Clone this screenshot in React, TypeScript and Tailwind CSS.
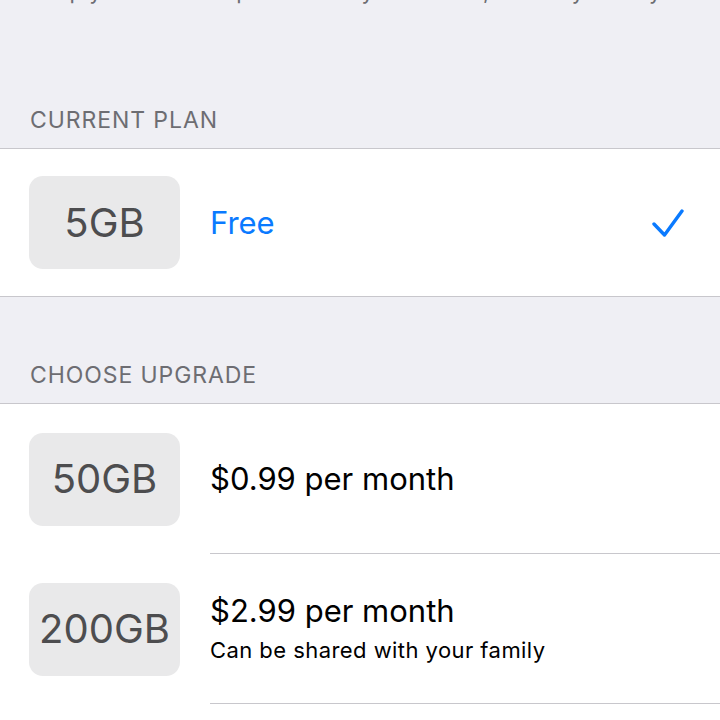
const sep = 'border-[#c8c7cc]'

function Badge({ label }: { label: string }) {
  return (
    <div className="flex h-[93px] w-[151px] shrink-0 items-center justify-center rounded-[14px] bg-[#e9e9ea]">
      <span className="text-[40px] leading-none text-[#4d4d4f]">{label}</span>
    </div>
  )
}

function SectionHeader({ title, height }: { title: string; height: string }) {
  return (
    <div className={`flex items-end px-[30px] pb-[14px] ${height}`}>
      <span className="text-[23px] leading-[28px] tracking-[0.04em] text-[#6d6d72]">{title}</span>
    </div>
  )
}

function UpgradeRow({ size, price, note }: { size: string; price: string; note?: string }) {
  return (
    <div className="flex items-center pl-[29px]">
      <Badge label={size} />
      <div className={`ml-[30px] flex h-[150px] flex-1 flex-col justify-center border-b ${sep}`}>
        <div className="text-[31px] leading-[36px] text-black">{price}</div>
        {note && <div className="mt-[7px] text-[22px] leading-[28px] tracking-[0.02em] text-black">{note}</div>}
      </div>
    </div>
  )
}

export default function App() {
  return (
    <div className="h-[720px] w-[720px] overflow-hidden bg-[#efeff4] font-['Inter',sans-serif]">
      {/* intro text, mostly scrolled off the top */}
      <div className="flex h-[148px] flex-col justify-between">
        <p className="-mt-[22px] whitespace-nowrap px-[30px] text-[22px] leading-[26px] text-[#6d6d72]">
          Keep your files and photos always available, securely store your devices.
        </p>
        <SectionHeader title="CURRENT PLAN" height="" />
      </div>

      <div className={`flex h-[149px] items-center border-y bg-white pl-[29px] pr-[36px] ${sep}`}>
        <Badge label="5GB" />
        <span className="ml-[30px] flex-1 text-[31px] leading-[36px] text-[#0a7aff]">Free</span>
        <svg width="32" height="30" viewBox="0 0 32 30" fill="none">
          <path d="M2 16 L12.5 27 L30 3" stroke="#0a7aff" strokeWidth="3.4" strokeLinecap="round" strokeLinejoin="round" />
        </svg>
      </div>

      <SectionHeader title="CHOOSE UPGRADE" height="h-[106px]" />

      <div className={`border-t bg-white ${sep}`}>
        <UpgradeRow size="50GB" price="$0.99 per month" />
        <UpgradeRow size="200GB" price="$2.99 per month" note="Can be shared with your family" />
        <div className="h-[40px]" />
      </div>
    </div>
  )
}
